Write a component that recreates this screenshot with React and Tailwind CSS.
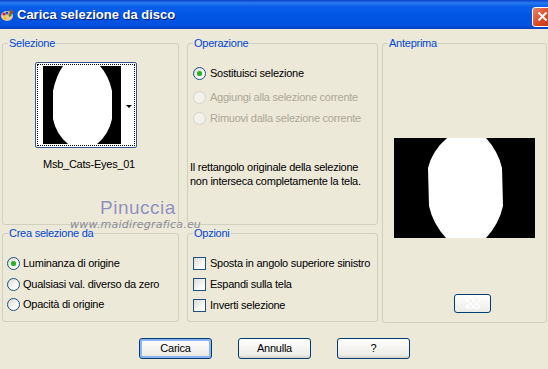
import React from 'react';

const font = "font-['Liberation_Sans',Arial,sans-serif]";

function Radio({ checked, disabled }) {
  return (
    <span
      className={
        disabled
          ? 'w-[13px] h-[13px] rounded-full border border-[#D5D3C6] bg-[#F2F1EB] shrink-0'
          : 'w-[13px] h-[13px] rounded-full border border-[#1C5180] bg-[linear-gradient(135deg,#D9D8D0,#FFFFFF_75%)] flex items-center justify-center shrink-0'
      }
    >
      {checked && <span className="w-[5px] h-[5px] rounded-full bg-[#2AAF2A] shadow-[0_0_1px_#6ad66a]" />}
    </span>
  );
}

function Check() {
  return (
    <span className="w-[13px] h-[13px] border border-[#1C5180] bg-[linear-gradient(135deg,#DCDBD3,#FFFFFF_80%)] shrink-0" />
  );
}

function Group({ title, className, children }) {
  return (
    <fieldset className={`border border-[#D0D0BF] rounded-[3px] ${className}`}>
      <legend className="ml-[5px] px-[1px] leading-[13px] text-[#0046D5]">{title}</legend>
      {children}
    </fieldset>
  );
}

// black mask with the white cat-eye shape
function Shape({ w, h, d }) {
  return (
    <svg width={w} height={h} viewBox={`0 0 ${w} ${h}`}>
      <rect width={w} height={h} fill="#000" />
      <path d={d} fill="#fff" />
    </svg>
  );
}

const thumbPath = 'M20 0 L57 0 Q66 10 69 25 L69 53 Q66 68 54 78 L25 78 Q13 68 10 53 L10 25 Q13 10 20 0 Z';
const previewPath = 'M53 0 L92 0 Q104 13 108 30 L109 68 Q105 86 92 100 L52 100 Q39 86 35 68 L34 30 Q38 13 53 0 Z';

function Btn({ children, primary }) {
  return (
    <button
      className={
        primary
          ? 'w-[73px] h-[21px] rounded-[3px] border border-[#003C74] bg-[linear-gradient(#FFFFFF,#ECEBE6_85%,#D6D0C5)] shadow-[inset_0_0_0_2px_#8CB4F2] text-black leading-[19px]'
          : 'w-[73px] h-[21px] rounded-[3px] border border-[#003C74] bg-[linear-gradient(#FFFFFF,#ECEBE6_85%,#D6D0C5)] text-black leading-[19px]'
      }
    >
      {children}
    </button>
  );
}

export default function App() {
  return (
    <div className={`relative w-[548px] h-[369px] overflow-hidden bg-[#ECE9D8] text-[11px] tracking-[-0.25px] text-black ${font}`}>
      {/* title bar */}
      <div className="h-[29px] flex items-center bg-[linear-gradient(#0A3FC8,#2A7BF0_10%,#0A5FEA_22%,#0055E3_55%,#0052DF_85%,#003FC5)]">
        <svg width="14" height="14" viewBox="0 0 14 14" className="ml-[1px]">
          <ellipse cx="6" cy="8" rx="6" ry="5" fill="#E9C89A" />
          <circle cx="3" cy="6" r="1.6" fill="#E02020" />
          <circle cx="6" cy="5" r="1.5" fill="#1F4FE0" />
          <circle cx="9" cy="7" r="1.5" fill="#23A023" />
          <circle cx="4" cy="10" r="1.4" fill="#F0C000" />
          <path d="M9 1 L13 4 L8 9 Z" fill="#8A5A2A" />
        </svg>
        <span className="ml-[2px] text-white font-bold text-[13px] tracking-[0px] [text-shadow:1px_1px_#0A1E78]">
          Carica selezione da disco
        </span>
        <div className="ml-auto mr-[-5px] mt-[4px] w-[21px] h-[20px] rounded-[3px] border border-white bg-[linear-gradient(135deg,#E8866A,#D8431F_60%,#C03A18)] flex items-center justify-center">
          <svg width="11" height="11" viewBox="0 0 11 11">
            <path d="M1.5 1.5 L9.5 9.5 M9.5 1.5 L1.5 9.5" stroke="#fff" strokeWidth="2" />
          </svg>
        </div>
      </div>

      {/* body */}
      <div className="pt-[8px] flex">
        <div className="ml-[2px] w-[177px] flex flex-col">
          <Group title="Selezione" className="h-[188px]">
            <div className="ml-[32px] mt-[12px] w-[102px] h-[86px] rounded-[2px] border border-[#33558A] bg-white p-[1px]">
              <div className="relative h-full border border-dotted border-black flex items-start">
                <div className="ml-[5px] mt-[1px]">
                  <Shape w={78} h={78} d={thumbPath} />
                </div>
                <span className="absolute right-[2px] top-[40px] w-0 h-0 border-l-[3px] border-r-[3px] border-t-[3px] border-l-transparent border-r-transparent border-t-black" />
              </div>
            </div>
            <div className="mt-[10px] ml-[40px] leading-[13px]">Msb_Cats-Eyes_01</div>
          </Group>
          <Group title="Crea selezione da" className="mt-[2px] h-[95px]">
            <div className="pl-[4px] pt-[17px] flex flex-col leading-[13px]">
              <div className="flex items-center gap-[3px]"><Radio checked />Luminanza di origine</div>
              <div className="mt-[8px] flex items-center gap-[3px]"><Radio />Qualsiasi val. diverso da zero</div>
              <div className="mt-[7px] flex items-center gap-[3px]"><Radio />Opacità di origine</div>
            </div>
          </Group>
        </div>

        <div className="ml-[8px] w-[191px] flex flex-col">
          <Group title="Operazione" className="h-[188px]">
            <div className="pl-[5px] pt-[17px] flex flex-col leading-[13px]">
              <div className="flex items-center gap-[4px]"><Radio checked />Sostituisci selezione</div>
              <div className="mt-[11px] flex items-center gap-[4px] text-[#ACA899]"><Radio disabled />Aggiungi alla selezione corrente</div>
              <div className="mt-[8px] flex items-center gap-[4px] text-[#ACA899]"><Radio disabled />Rimuovi dalla selezione corrente</div>
            </div>
            <div className="mt-[35px] pl-[2px] leading-[14px]">
              Il rettangolo originale della selezione
              <br />
              non interseca completamente la tela.
            </div>
          </Group>
          <Group title="Opzioni" className="mt-[2px] h-[95px]">
            <div className="pl-[5px] pt-[17px] flex flex-col leading-[13px]">
              <div className="flex items-center gap-[4px]"><Check />Sposta in angolo superiore sinistro</div>
              <div className="mt-[8px] flex items-center gap-[4px]"><Check />Espandi sulla tela</div>
              <div className="mt-[8px] flex items-center gap-[4px]"><Check />Inverti selezione</div>
            </div>
          </Group>
        </div>

        <div className="ml-[4px] w-[165px]">
          <Group title="Anteprima" className="h-[286px]">
            <div className="mt-[88px] ml-[11px]">
              <Shape w={141} h={100} d={previewPath} />
            </div>
            <div className="mt-[56px] ml-[71px] w-[37px] h-[19px] rounded-[3px] border border-[#003C74] bg-[linear-gradient(#FFFFFF,#ECEBE6)] flex items-center justify-center">
              <div className="w-[14px] h-[10px] bg-[repeating-conic-gradient(#F4F4F2_0_25%,#FFFFFF_0_50%)] bg-[length:6px_6px]" />
            </div>
          </Group>
        </div>
      </div>

      {/* buttons */}
      <div className="mt-[15px] pl-[139px] flex gap-[26px]">
        <Btn primary>Carica</Btn>
        <Btn>Annulla</Btn>
        <Btn>?</Btn>
      </div>

      {/* watermark overlay */}
      <div className="absolute left-[100px] top-[197px] text-[19px] leading-[22px] tracking-[0.5px] text-[#8E8EB8] [text-shadow:0_0_1px_#FFFFFF]">
        Pinuccia
      </div>
      <div className="absolute left-[70px] top-[219px] text-[11px] leading-[12px] italic tracking-[0.2px] text-[#8C8C99] font-['DejaVu_Sans',sans-serif]">
        www.maidiregrafica.eu
      </div>
    </div>
  );
}
